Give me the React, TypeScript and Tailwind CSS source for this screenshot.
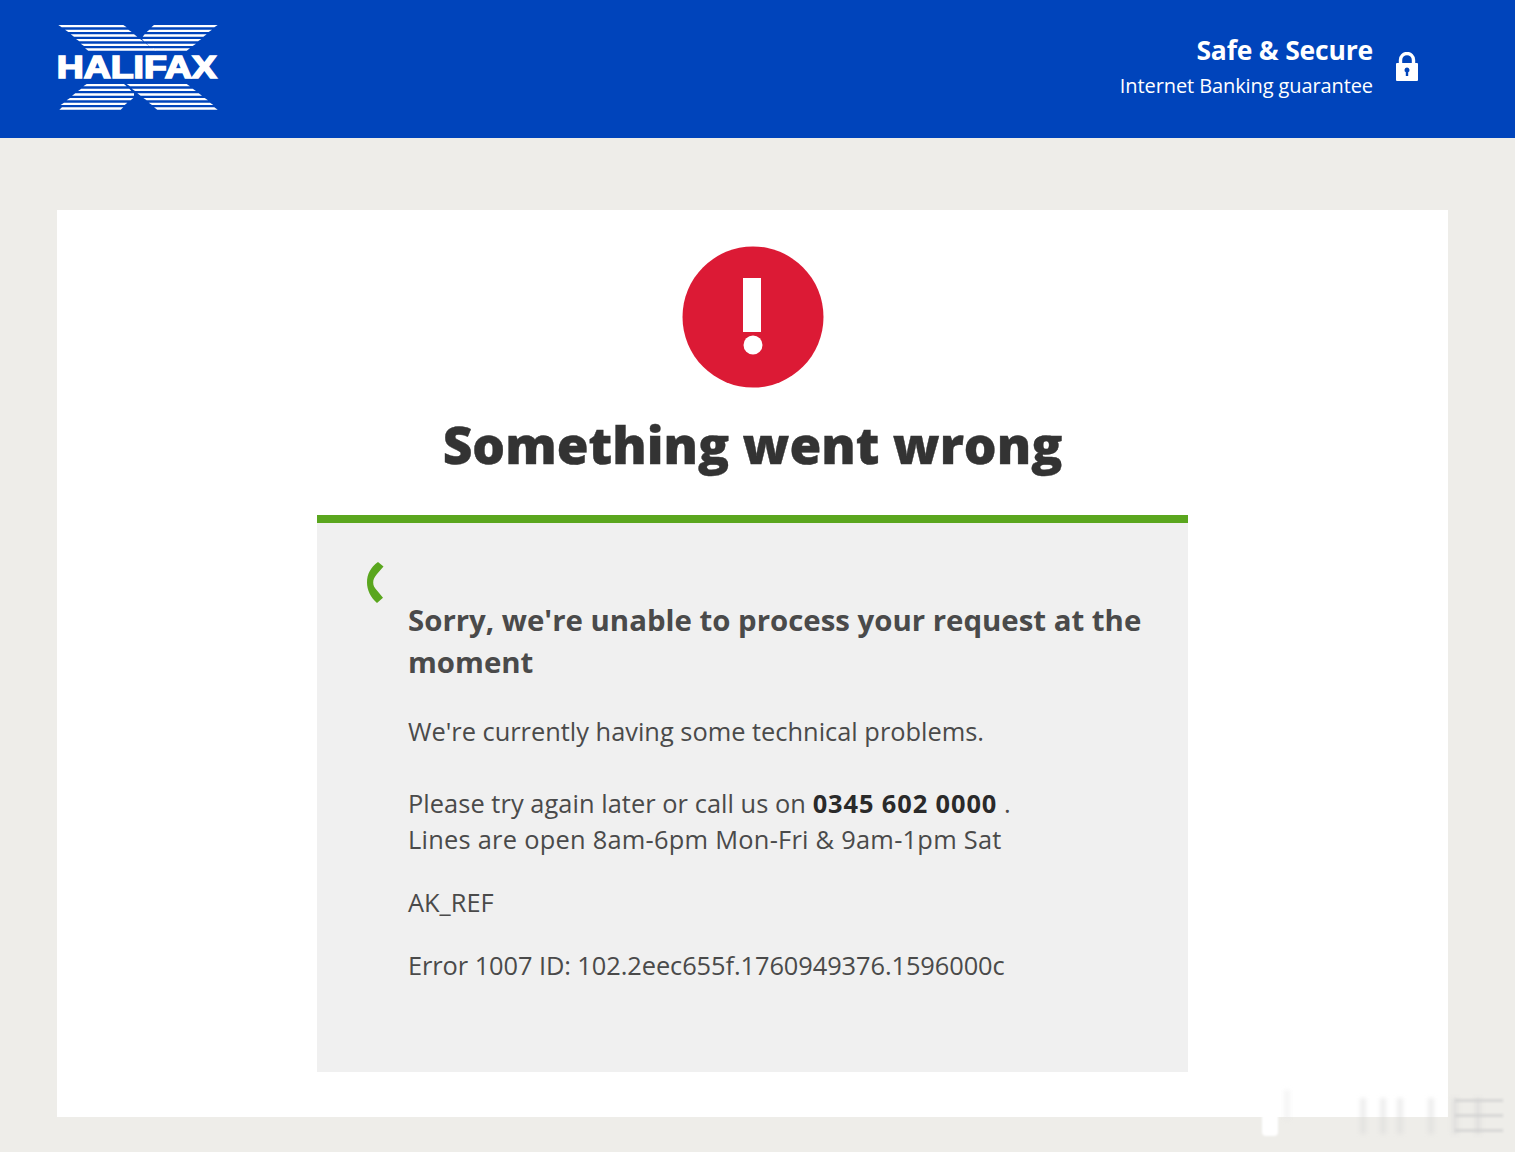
const font = "font-['Open_Sans','Noto_Sans',sans-serif]";

// logo stripes read off the reference: [y, left, right, slant of left end, slant of right end]
const stripes: [number, number, number, number, number][] = [
  [45, 55, 250, 10, 10],
  [59, 75, 265, 10, 10],
  [73, 92, 282, 10, 10],
  [87, 108, 300, 10, 10],
  [101, 122, 318, 10, 10],
  [115, 135, 340, 10, 8],
  [45, 342, 533, -8, -10],
  [59, 328, 516, -8, -10],
  [73, 314, 500, -6, -10],
  [87, 306, 484, 6, -10],
  [101, 320, 468, 8, -10],
  [115, 338, 450, 8, -10],
  [222, 140, 252, -10, 8],
  [236, 124, 268, -10, 6],
  [250, 106, 282, -10, 0],
  [264, 90, 280, -10, -8],
  [278, 72, 262, -10, -8],
  [292, 66, 250, -8, -8],
  [222, 260, 440, 10, 10],
  [236, 275, 458, 10, 10],
  [250, 292, 476, 10, 10],
  [264, 310, 494, 10, 10],
  [278, 326, 510, 10, 10],
  [292, 342, 523, 10, 10],
];

function HalifaxLogo() {
  return (
    <svg width="200" height="110" viewBox="0 0 600 330" className="block">
      {stripes.map(([y, l, r, sl, sr]) => (
        <polygon key={`${y}-${l}`} fill="#fff" points={`${l},${y} ${r},${y} ${r + sr},${y + 7} ${l + sl},${y + 7}`} />
      ))}
      <text
        x="50"
        y="205"
        fill="#fff"
        stroke="#fff"
        strokeWidth="5"
        fontFamily="'Liberation Sans', Arial, sans-serif"
        fontWeight="700"
        fontSize="96"
        textLength="480"
        lengthAdjust="spacingAndGlyphs"
      >
        HALIFAX
      </text>
    </svg>
  );
}

function LockIcon() {
  return (
    <svg width="24" height="30" viewBox="0 0 24 30" className="block mb-[3px]">
      <path d="M5.500 13V8a6.500 6.500 0 0 1 13 0v5" fill="none" stroke="#fff" strokeWidth="3.400" />
      <path
        fillRule="evenodd"
        fill="#fff"
        d="M2 11h20a1 1 0 0 1 1 1v16a1 1 0 0 1-1 1H2a1 1 0 0 1-1-1V12a1 1 0 0 1 1-1z M12 15.500a2.500 2.500 0 0 0-1.200 4.700V24h2.400v-3.800a2.500 2.500 0 0 0-1.200-4.700z"
      />
    </svg>
  );
}

function AlertIcon() {
  return (
    <svg width="142" height="142" viewBox="0 0 142 142" className="block">
      <circle cx="71" cy="71" r="70.5" fill="#dc1a35" />
      <rect x="61" y="32" width="18" height="54" fill="#fff" />
      <circle cx="71" cy="99" r="9.500" fill="#fff" />
    </svg>
  );
}

function PhoneIcon() {
  return (
    <svg width="18" height="42" viewBox="0 0 18 42" className="block">
      <path
        fill="#5aa61e"
        d="M11 0 16.500 4.500 10 12C7.500 15 6.200 17.500 6.200 20.500c0 3 1.300 5.500 3.800 8l6 7.200L10 41C3.500 35.500 0 28 0 20.500 0 12 3.500 5.500 11 0z"
      />
    </svg>
  );
}

export default function App() {
  return (
    <div className={`min-h-[1152px] bg-[#eeede9] relative overflow-hidden ${font}`}>
      <header className="h-[138px] bg-[#0044bb] flex items-start justify-between pl-[40px] pr-[96px]">
        <div className="mt-[10px]">
          <HalifaxLogo />
        </div>
        <div className="flex items-center gap-[22px] mt-[32px]">
          <div className="text-right text-white">
            <div className="text-[26.5px] leading-[36px] font-bold tracking-[-0.2px]">Safe &amp; Secure</div>
            <div className="text-[20px] leading-[36px] tracking-[-0.1px]">Internet Banking guarantee</div>
          </div>
          <LockIcon />
        </div>
      </header>

      <main className="ml-[57px] mr-[67px] mt-[72px] h-[907px] bg-white flex flex-col items-center pt-[36px]">
        <AlertIcon />
        <h1 className="mt-[21px] text-[51.500px] leading-[70px] font-extrabold text-[#333333] [-webkit-text-stroke:0.4px_#333333]">
          Something went wrong
        </h1>

        <section className="mt-[36px] w-[871px] h-[557px] bg-[#f0f0f0] border-t-[8px] border-[#5aa61e] flex text-[#4a4a4a]">
          <div className="w-[91px] pl-[50px] pt-[39px] shrink-0">
            <PhoneIcon />
          </div>
          <div className="pt-[76px] pr-[40px]">
            <h2 className="text-[29.400px] leading-[42px] font-bold">Sorry, we're unable to process your request at the moment</h2>
            <p className="mt-[30px] text-[25.400px] leading-[36px]">We're currently having some technical problems.</p>
            <p className="mt-[36px] text-[25.400px] leading-[36px] tracking-[0.05px]">
              Please try again later or call us on{" "}
              <strong className="font-bold text-[#2a2a2a] tracking-[0.9px]">0345 602 0000</strong> .
            </p>
            <p className="text-[25.400px] leading-[36px] tracking-[0.26px]">Lines are open 8am-6pm Mon-Fri &amp; 9am-1pm Sat</p>
            <p className="mt-[27px] text-[25.400px] leading-[36px]">AK_REF</p>
            <p className="mt-[27px] text-[25.400px] leading-[36px] tracking-[-0.08px]">Error 1007 ID: 102.2eec655f.1760949376.1596000c</p>
          </div>
        </section>
      </main>

      {/* faint image watermark over the bottom right corner */}
      <div className="absolute left-[1262px] top-[1090px] flex items-end h-[46px]">
        <div className="w-[16px] h-[46px] bg-white rounded-b-sm blur-[1px]" />
        <div className="ml-[6px] mb-[16px] w-[6px] h-[30px] bg-[#e5e5e5]/40 blur-[2px]" />
        <div className="ml-[70px] mb-[2px] w-[6px] h-[36px] bg-[#d5d5d5]/40 blur-[2px]" />
        <div className="ml-[14px] mb-[2px] w-[6px] h-[36px] bg-[#d5d5d5]/40 blur-[2px]" />
        <div className="ml-[11px] mb-[2px] w-[6px] h-[36px] bg-[#d5d5d5]/40 blur-[2px]" />
        <div className="ml-[25px] mb-[2px] w-[6px] h-[36px] bg-[#d5d5d5]/40 blur-[2px]" />
        <div className="ml-[18px] mb-[2px] w-[6px] h-[36px] bg-[#d5d5d5]/50 blur-[2px]" />
        <div className="ml-[17px] mb-[2px] w-[6px] h-[36px] bg-[#d5d5d5]/50 blur-[2px]" />
      </div>
      <div className="absolute left-[1455px] top-[1099px] w-[48px] flex flex-col gap-[12px]">
        <div className="h-[3px] bg-[#cfcfcf]/70 blur-[1px]" />
        <div className="h-[3px] bg-[#cfcfcf]/70 blur-[1px]" />
        <div className="h-[3px] bg-[#cfcfcf]/70 blur-[1px]" />
      </div>
    </div>
  );
}
